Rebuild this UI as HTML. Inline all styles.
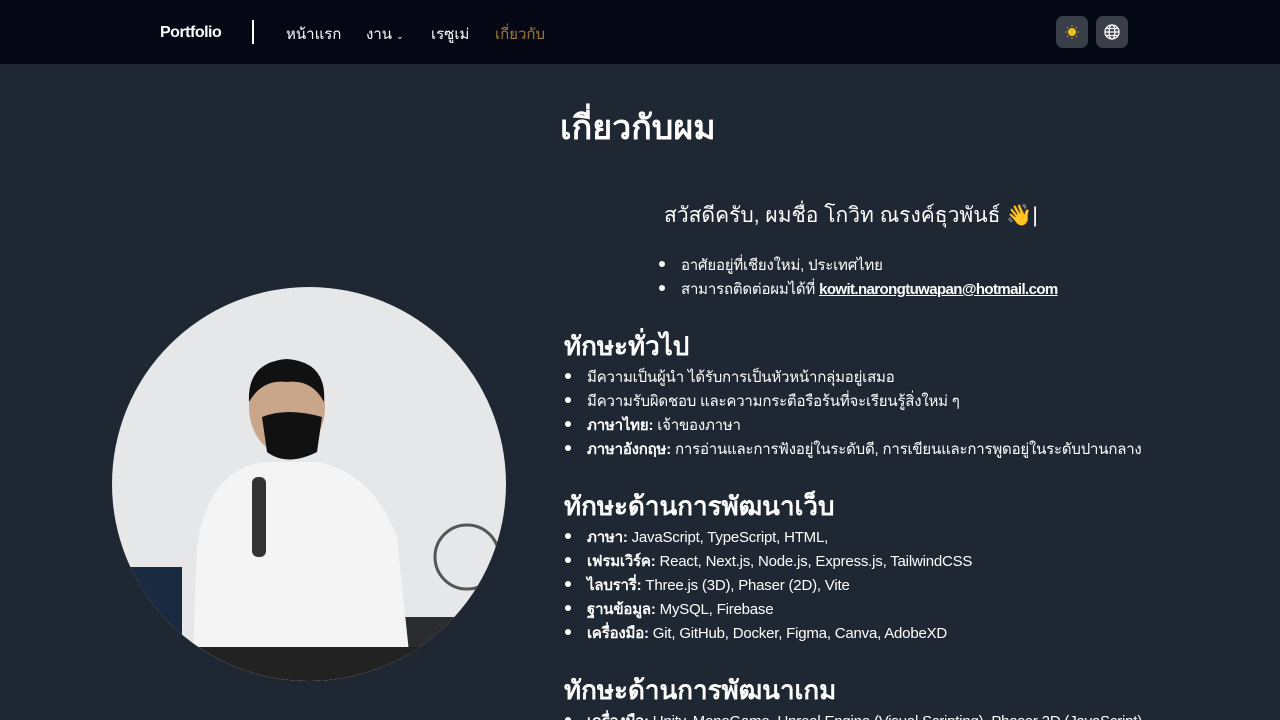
<!DOCTYPE html>
<html style="overflow:hidden;height:720px"><head><meta charset="utf-8"><style>
*{margin:0;padding:0;box-sizing:border-box}
body{width:1280px;height:720px;overflow:hidden;background:#1f2733;color:#fff;font-family:"Liberation Sans","Noto Sans CJK SC",sans-serif;position:relative}
nav{position:absolute;left:0;top:0;width:1280px;height:64px;background:#050814}
.t{position:absolute;white-space:nowrap}
.nv{top:22px;font-size:15px}
.btn{position:absolute;top:16px;width:32px;height:32px;border-radius:7px;background:#3b3f49}
ul{list-style:none}
li{position:absolute;white-space:nowrap;font-size:15px;letter-spacing:-0.2px}
li:before{content:"";position:absolute;left:-22px;top:8px;width:6px;height:6px;border-radius:50%;background:#fff}
h2{position:absolute;font-size:26px;font-weight:bold;white-space:nowrap}
</style></head><body>
<nav>
<div class="t" style="left:160px;top:24px;font-size:16px;font-weight:bold;letter-spacing:-0.5px">Portfolio</div>
<div style="position:absolute;left:252px;top:20px;width:2px;height:24px;background:#fff"></div>
<div class="t nv" style="left:286px">หน้าแรก</div>
<div class="t nv" style="left:366px">งาน <span style="font-size:9px">⌄</span></div>
<div class="t nv" style="left:431px">เรซูเม่</div>
<div class="t nv" style="left:495px;color:#a07a3a">เกี่ยวกับ</div>
<div class="btn" style="left:1056px"><svg width="32" height="32"><circle cx="16" cy="16" r="4" fill="#e8c020"/><g stroke="#b08c20" stroke-width="1"><path d="M16 9v2M16 21v2M9 16h2M21 16h2M11 11l1.3 1.3M19.7 19.7L21 21M11 21l1.3-1.3M19.7 12.3L21 11"/></g></svg></div>
<div class="btn" style="left:1096px"><svg width="32" height="32" fill="none" stroke="#fff" stroke-width="1.3"><circle cx="16" cy="16" r="7"/><ellipse cx="16" cy="16" rx="3" ry="7"/><path d="M9 16h14M10 12.5h12M10 19.5h12"/></svg></div>
</nav>
<div class="t" style="left:560px;top:100px;font-size:34px;font-weight:bold">เกี่ยวกับผม</div>
<svg style="position:absolute;left:112px;top:287px" width="394" height="394">
<defs><clipPath id="c"><circle cx="197" cy="197" r="197"/></clipPath></defs>
<g clip-path="url(#c)">
<rect width="394" height="394" fill="#e6e7e9"/>
<rect x="0" y="280" width="70" height="120" fill="#1a2a40"/>
<rect x="270" y="330" width="124" height="70" fill="#2a2c30"/>
<circle cx="355" cy="270" r="32" fill="none" stroke="#555" stroke-width="3"/>
<path d="M80 394 L85 260 Q95 185 150 175 L205 175 Q260 185 285 250 L300 394Z" fill="#f4f4f4"/>
<ellipse cx="175" cy="120" rx="38" ry="48" fill="#c9a58a"/>
<path d="M137 115 Q135 75 175 72 Q215 75 212 115 Q200 92 175 95 Q150 92 137 115Z" fill="#111"/>
<path d="M150 130 Q175 120 210 130 L205 165 Q175 180 155 165Z" fill="#111"/>
<rect x="140" y="190" width="14" height="80" rx="6" fill="#333"/>
<path d="M0 394V360H394V394Z" fill="#222"/>
</g></svg>
<div class="t" style="left:664px;top:199px;font-size:21px">สวัสดีครับ, ผมชื่อ โกวิท ณรงค์ธุวพันธ์ 👋|</div>
<ul>
<li style="left:681px;top:253px">อาศัยอยู่ที่เชียงใหม่, ประเทศไทย</li>
<li style="left:681px;top:277px">สามารถติดต่อผมได้ที่ <b style="text-decoration:underline;letter-spacing:-0.6px">kowit.narongtuwapan@hotmail.com</b></li>
</ul>
<h2 style="left:564px;top:326px">ทักษะทั่วไป</h2>
<ul>
<li style="left:587px;top:365px">มีความเป็นผู้นำ ได้รับการเป็นหัวหน้ากลุ่มอยู่เสมอ</li>
<li style="left:587px;top:389px">มีความรับผิดชอบ และความกระตือรือร้นที่จะเรียนรู้สิ่งใหม่ ๆ</li>
<li style="left:587px;top:413px"><b>ภาษาไทย:</b> เจ้าของภาษา</li>
<li style="left:587px;top:437px"><b>ภาษาอังกฤษ:</b> การอ่านและการฟังอยู่ในระดับดี, การเขียนและการพูดอยู่ในระดับปานกลาง</li>
</ul>
<h2 style="left:564px;top:486px">ทักษะด้านการพัฒนาเว็บ</h2>
<ul>
<li style="left:587px;top:525px"><b>ภาษา:</b> JavaScript, TypeScript, HTML,</li>
<li style="left:587px;top:549px"><b>เฟรมเวิร์ค:</b> React, Next.js, Node.js, Express.js, TailwindCSS</li>
<li style="left:587px;top:573px"><b>ไลบรารี่:</b> Three.js (3D), Phaser (2D), Vite</li>
<li style="left:587px;top:597px"><b>ฐานข้อมูล:</b> MySQL, Firebase</li>
<li style="left:587px;top:621px"><b>เครื่องมือ:</b> Git, GitHub, Docker, Figma, Canva, AdobeXD</li>
</ul>
<h2 style="left:564px;top:670px">ทักษะด้านการพัฒนาเกม</h2>
<ul>
<li style="left:587px;top:709px"><b>เครื่องมือ:</b> Unity, MonoGame, Unreal Engine (Visual Scripting), Phaser 2D (JavaScript)</li>
</ul>
</body></html>
